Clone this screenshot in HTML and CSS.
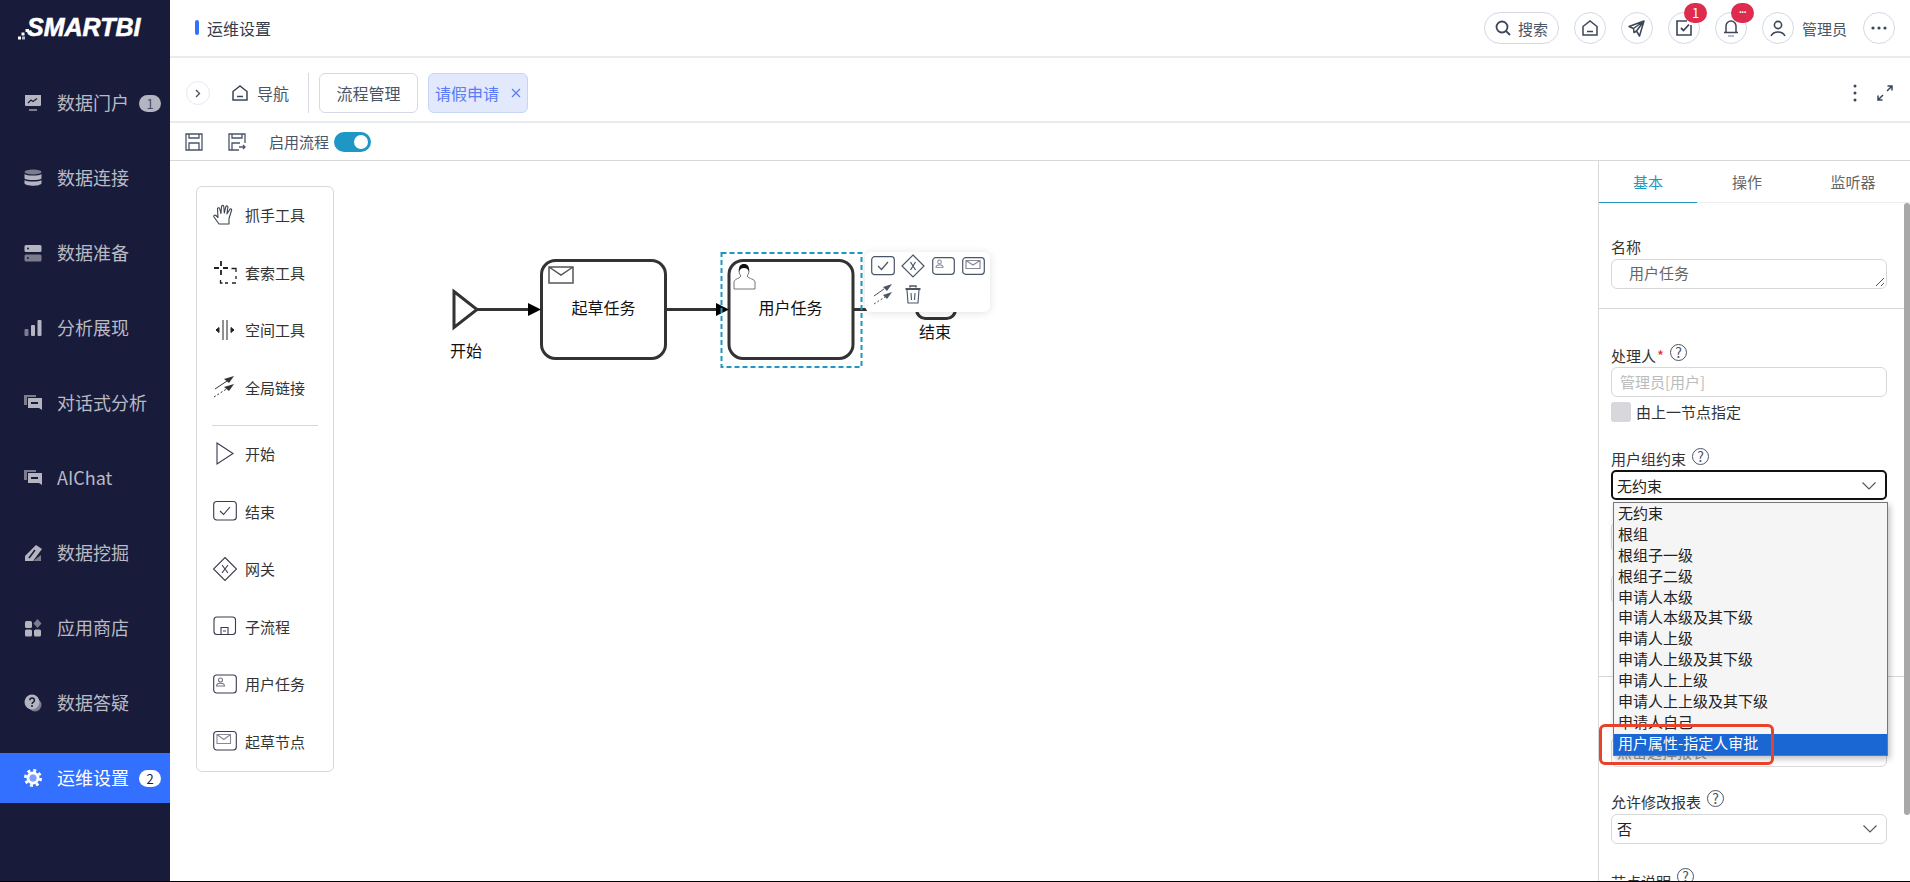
FILE: index.html
```html
<!DOCTYPE html>
<html lang="en">
<head>
  <meta charset="UTF-8">
  <title>运维设置</title>
  <link rel="stylesheet" href="styles.css">
</head>
<body>

<div class="app">
  <!-- Sidebar -->
  <aside class="sidebar">
    <div class="logo">
      <svg class="logo-dots" width="11" height="11" viewBox="0 0 11 11" fill="#fff"><rect x="0" y="7.500" width="3" height="3"/><rect x="3.500" y="3.500" width="3" height="3"/><rect x="7.500" y="0" width="3.500" height="3"/><rect x="4" y="7.500" width="3" height="3" opacity=".7"/></svg>
      <span>SMARTBI</span>
    </div>
    <nav class="menu">
      <a class="menu-item">
        <svg class="menu-icon" viewBox="0 0 18 18"><path d="M1 1h16v10a1 1 0 0 1-1 1H2a1 1 0 0 1-1-1z" fill="#b4b5c0"/><path d="M4 9l3-3 2 1.500 4-3" stroke="#181c3a" stroke-width="1.200" fill="none"/><rect x="5" y="15" width="8" height="2" fill="#7b7d8e"/></svg>
        <span class="menu-label">数据门户</span><span class="menu-badge">1</span>
      </a>
      <a class="menu-item">
        <svg class="menu-icon" viewBox="0 0 18 18" fill="#b4b5c0"><ellipse cx="9" cy="3" rx="8.500" ry="2.500" fill="#7b7d8e"/><path d="M.5 5c2 2 15 2 17 0v4.500c-2 2-15 2-17 0zM.5 11c2 2 15 2 17 0v3.500c-2 3-15 3-17 0z"/></svg>
        <span class="menu-label">数据连接</span>
      </a>
      <a class="menu-item">
        <svg class="menu-icon" viewBox="0 0 18 18"><rect x=".5" y="1" width="17" height="7" rx="1.500" fill="#b4b5c0"/><rect x=".5" y="10.500" width="17" height="7" rx="1.500" fill="#7b7d8e"/><circle cx="4" cy="4.500" r="1" fill="#181c3a"/><circle cx="4" cy="14" r="1" fill="#181c3a"/></svg>
        <span class="menu-label">数据准备</span>
      </a>
      <a class="menu-item">
        <svg class="menu-icon" viewBox="0 0 18 18"><rect x=".5" y="10" width="4" height="7" rx="1" fill="#7b7d8e"/><rect x="7" y="6" width="4" height="11" rx="1" fill="#b4b5c0"/><rect x="13.500" y="1" width="4" height="16" rx="1" fill="#b4b5c0"/></svg>
        <span class="menu-label">分析展现</span>
      </a>
      <a class="menu-item">
        <svg class="menu-icon" viewBox="0 0 18 18"><path d="M0 1h12v2H3v8H0z" fill="#7b7d8e"/><path d="M4 4h14v12l-3-2H4z" fill="#b4b5c0"/><rect x="7" y="8" width="7" height="2" fill="#181c3a"/></svg>
        <span class="menu-label">对话式分析</span>
      </a>
      <a class="menu-item">
        <svg class="menu-icon" viewBox="0 0 18 18"><path d="M0 1h12v2H3v8H0z" fill="#7b7d8e"/><path d="M4 4h14v12l-3-2H4z" fill="#b4b5c0"/><rect x="7" y="8" width="7" height="2" fill="#181c3a"/></svg>
        <span class="menu-label">AIChat</span>
      </a>
      <a class="menu-item">
        <svg class="menu-icon" viewBox="0 0 18 18"><path d="M9 17h8v-6z" fill="#7b7d8e"/><path d="M12 1l6 4-9 12H1v-5z" fill="#b4b5c0"/><path d="M5 14l6-8" stroke="#181c3a" stroke-width="1.500"/></svg>
        <span class="menu-label">数据挖掘</span>
      </a>
      <a class="menu-item">
        <svg class="menu-icon" viewBox="0 0 18 18" fill="#b4b5c0"><rect x="1" y="2" width="7" height="7" rx="1.500"/><path d="M13.500 0l4 4.500-4 4.500-4-4.500z" fill="#7b7d8e"/><rect x="1" y="10.500" width="7" height="7" rx="1.500"/><rect x="10" y="10.500" width="7" height="7" rx="1.500"/></svg>
        <span class="menu-label">应用商店</span>
      </a>
      <a class="menu-item">
        <svg class="menu-icon" viewBox="0 0 18 18"><circle cx="11" cy="11" r="6.500" fill="#7b7d8e"/><circle cx="8" cy="8" r="7.500" fill="#b4b5c0"/><path d="M5.800 6.200a2.300 2.300 0 1 1 3.500 2c-.9.500-1.200 1-1.200 1.800" stroke="#181c3a" stroke-width="1.500" fill="none"/><circle cx="8" cy="12" r="1" fill="#181c3a"/></svg>
        <span class="menu-label">数据答疑</span>
      </a>
      <a class="menu-item active">
        <svg class="menu-icon" viewBox="0 0 18 18"><circle cx="9" cy="9" r="3.500" fill="#7d9ffb"/><circle cx="9" cy="9" r="5" fill="none" stroke="#fff" stroke-width="3"/><circle cx="9" cy="9" r="7.600" fill="none" stroke="#fff" stroke-width="2.800" stroke-dasharray="3 2.970"/></svg>
        <span class="menu-label">运维设置</span><span class="menu-badge">2</span>
      </a>
    </nav>
  </aside>

  <main class="main">
    <!-- Header -->
    <header class="topbar">
      <div class="page-title">运维设置</div>
      <div class="top-actions">
        <div class="search-pill">
          <svg width="16" height="16" viewBox="0 0 16 16" fill="none" stroke="#3c4658" stroke-width="1.800"><circle cx="7" cy="7" r="5.500"/><path d="M11 11l4 4"/></svg>
          <span>搜索</span>
        </div>
        <div class="circle-btn"><svg width="16" height="16" viewBox="0 0 16 16" fill="none" stroke="#3c4658" stroke-width="1.500"><path d="M1 6.500L8 1l7 5.500V15H1z"/><path d="M5 11.500h6"/></svg></div>
        <div class="circle-btn"><svg width="17" height="17" viewBox="0 0 17 17" fill="none" stroke="#3c4658" stroke-width="1.500" stroke-linejoin="round"><path d="M1 6.500L16 1l-4.500 15-3-5-2.500 1.500-.5-4zM5.500 8.500L16 1 8.500 11"/></svg></div>
        <div class="circle-btn">
          <svg width="16" height="16" viewBox="0 0 16 16" fill="none" stroke="#3c4658" stroke-width="1.600"><path d="M11 1H1v14h14V5"/><path d="M5 8l2.500 2.500L13 4.500" stroke-width="1.800"/></svg>
          <span class="red-badge">1</span>
        </div>
        <div class="circle-btn">
          <svg width="16" height="18" viewBox="0 0 16 18" fill="none" stroke="#3c4658" stroke-width="1.500"><path d="M1 13.500h14M3 13.500V7a5 5 0 0 1 10 0v6.500"/><path d="M5 17h6" stroke="#a0a6b2"/></svg>
          <span class="red-badge dots">···</span>
        </div>
        <div class="user-box">
          <div class="circle-btn"><svg width="16" height="17" viewBox="0 0 16 17" fill="none" stroke="#3c4658" stroke-width="1.600"><circle cx="8" cy="5" r="3.600"/><path d="M1 16c1.500-3 4-4 7-4s5.500 1 7 4"/></svg></div>
          <span>管理员</span>
        </div>
        <div class="circle-btn"><svg width="16" height="4" viewBox="0 0 16 4" fill="#3c4658"><circle cx="2" cy="2" r="1.600"/><circle cx="8" cy="2" r="1.600"/><circle cx="14" cy="2" r="1.600"/></svg></div>
      </div>
    </header>

    <!-- Tabs -->
    <div class="tabbar">
      <div class="collapse-btn"><svg width="6" height="9" viewBox="0 0 6 9" fill="none" stroke="#444e5e" stroke-width="1.300"><path d="M1 1l3.500 3.500L1 8"/></svg></div>
      <div class="nav-home">
        <svg width="16" height="16" viewBox="0 0 16 16" fill="none" stroke="#3c4658" stroke-width="1.500"><path d="M1 6.500L8 1l7 5.500V15H1z"/><path d="M5 11.500h6"/></svg>
        <span>导航</span>
      </div>
      <div class="tab-sep"></div>
      <div class="tab">流程管理</div>
      <div class="tab tab-on">请假申请
        <svg class="tab-close" width="10" height="10" viewBox="0 0 10 10" stroke="#5a7bf5" stroke-width="1.200"><path d="M1 1l8 8M9 1l-8 8"/></svg>
      </div>
      <div class="tab-tools">
        <svg width="4" height="18" viewBox="0 0 4 18" fill="#3c4658"><circle cx="2" cy="2" r="1.500"/><circle cx="2" cy="9" r="1.500"/><circle cx="2" cy="16" r="1.500"/></svg>
        <svg width="16" height="16" viewBox="0 0 16 16" fill="none" stroke="#3c4658" stroke-width="1.500"><path d="M10 6l5-5M10.500 1H15v4.500M6 10l-5 5M1 10.500V15h4.500"/></svg>
      </div>
    </div>

    <!-- Toolbar -->
    <div class="toolbar">
      <svg class="save-icon" width="18" height="18" viewBox="0 0 18 18" fill="none" stroke="#4a5566" stroke-width="1.300"><path d="M1 1h16v16H1zM4 1v4h10V1M4 17v-7h10v7"/></svg>
      <svg class="save-icon" width="18" height="18" viewBox="0 0 18 18" fill="none" stroke="#4a5566" stroke-width="1.300"><path d="M17 10V1H1v16h10M4 1v4h10V1M4 17v-7h8M11 14h6M15 12l2 2-2 2"/></svg>
      <span class="toolbar-label">启用流程</span>
      <span class="switch"><i></i></span>
    </div>

    <div class="work">
      <!-- Canvas -->
      <section class="canvas">
        <div class="palette">
          <div class="tool">
            <svg class="tool-icon" viewBox="0 0 24 24" fill="none" stroke="#3c4454" stroke-width="1.100" stroke-linejoin="round"><path d="M6 21l-5-7c-.8-1.300.8-2.500 2-1.500l2 2L4.500 6c-.2-1.500 1.800-1.800 2.200-.4L8 10.500 8.500 3.500c.1-1.500 2.200-1.500 2.300 0l.5 6.500 1.500-6.200c.4-1.400 2.300-1 2.100.4l-1 6.800 2.800-4.500c.8-1.200 2.400-.3 1.800 1L16 15.500V21z"/></svg>
            <span>抓手工具</span>
          </div>
          <div class="tool">
            <svg class="tool-icon" viewBox="0 0 24 24" fill="none" stroke="#222" stroke-width="1.300"><path d="M8 1v5M8 10v5M1 8h5M10 8h5" stroke-width="1.800"/><path d="M18.500 8.500H23V12M23 16v3M23 23h-4M15 23h-3M9.500 23H7.500v-3"/></svg>
            <span>套索工具</span>
          </div>
          <div class="tool">
            <svg class="tool-icon" viewBox="0 0 24 24" fill="#222" stroke="#222" stroke-width="1"><path d="M10 2v20M14 2v20" fill="none"/><path d="M6 12H3M3 12l3-2.500v5zM18 12h3M21 12l-3-2.500v5z"/></svg>
            <span>空间工具</span>
          </div>
          <div class="tool">
            <svg class="tool-icon" viewBox="0 0 24 24"><path d="M2 14L14 6" stroke="#333" fill="none"/><path d="M21 1l-10 3 5 4z" fill="#333"/><path d="M1 22L15 13" stroke="#333" stroke-dasharray="2 2" fill="none"/><path d="M21 9l-10 3 5 4z" fill="#333"/></svg>
            <span>全局链接</span>
          </div>
          <div class="tool-sep"></div>
          <div class="tool">
            <svg class="tool-icon" viewBox="0 0 24 24" fill="none" stroke="#3a3a50" stroke-width="1.100"><path d="M4 1l16 10.500L4 22z"/></svg>
            <span>开始</span>
          </div>
          <div class="tool">
            <svg class="tool-icon" viewBox="0 0 24 24" fill="none" stroke="#3a3a50" stroke-width="1.100"><rect x=".7" y="2.500" width="22.600" height="18.500" rx="3"/><path d="M7 12l3.500 3.500L17 8"/></svg>
            <span>结束</span>
          </div>
          <div class="tool">
            <svg class="tool-icon" viewBox="0 0 24 24" fill="none" stroke="#3a3a50" stroke-width="1.100"><path d="M12 .5L23.500 12 12 23.500.5 12z"/><path d="M9 8l6 8M15 8l-6 8"/></svg>
            <span>网关</span>
          </div>
          <div class="tool">
            <svg class="tool-icon" viewBox="0 0 24 24" fill="none" stroke="#3a3a50" stroke-width="1.100"><rect x="1" y="3" width="21.500" height="17.500" rx="3"/><path d="M8 20v-6.500h7V20M10 17h3"/></svg>
            <span>子流程</span>
          </div>
          <div class="tool">
            <svg class="tool-icon" viewBox="0 0 24 24" fill="none" stroke="#3a3a50" stroke-width="1.100"><rect x=".7" y="3" width="22.600" height="18" rx="3"/><circle cx="7.500" cy="8" r="2" stroke="#778"/><path d="M3.500 14c0-1.800 2-2.800 4-2.800s4 1 4 2.800z" stroke="#778"/></svg>
            <span>用户任务</span>
          </div>
          <div class="tool">
            <svg class="tool-icon" viewBox="0 0 24 24" fill="none" stroke="#3a3a50" stroke-width="1.100"><rect x=".7" y="2.500" width="22.600" height="18.500" rx="3"/><path d="M4 5.500h13.500v9H4zM4 5.500l6.750 5 6.750-5" stroke="#889"/></svg>
            <span>起草节点</span>
          </div>
        </div>

        <!-- BPMN diagram, coordinates are the content here -->
        <svg class="diagram" width="1428" height="720" viewBox="170 161 1428 720">
          <g fill="none" stroke="#333" stroke-width="3">
            <path d="M454 291.500l23 18-23 18z"/>
            <path d="M477 309.500h51M666 309.500h50M853 309.500h30"/>
            <rect x="541.500" y="260.500" width="124" height="98" rx="14"/>
            <rect x="729" y="260.500" width="124" height="98" rx="14" fill="#fff"/>
            <path d="M916.500 300v9.500a9 9 0 0 0 9 9h21a9 9 0 0 0 9-9V300"/>
          </g>
          <path d="M528 303l13 6.500-13 6.500zM716 303l13 6.500-13 6.500z" fill="#000"/>
          <g fill="none" stroke="#555" stroke-width="1.500">
            <path d="M549 267h24v16h-24zM549 267l12 8 12-8"/>
          </g>
          <g fill="none" stroke="#666" stroke-width=".9">
            <path d="M734 289v-7c0-3 5-3 7-6-3-3-3-10 3-10s6 7 3 10c2 3 8 3 8 6v7z" fill="#fff"/>
          </g>
          <path d="M739 272c-.5-6 1.500-8 5-8s5.500 2 5 8c-1-3-2-4-5-4s-4 1-5 4z" fill="#111"/>
          <rect x="721.500" y="253" width="140" height="114" fill="none" stroke="#1f97c4" stroke-width="2" stroke-dasharray="5 3"/>
          <text class="d-text" x="603.500" y="314" text-anchor="middle">起草任务</text>
          <text class="d-text" x="790.500" y="314" text-anchor="middle">用户任务</text>
          <text class="d-text" x="466" y="357" text-anchor="middle">开始</text>
          <text class="d-text" x="935" y="338" text-anchor="middle">结束</text>
        </svg>

        <!-- Context pad -->
        <div class="pad">
          <svg width="24" height="20" viewBox="0 0 24 20" fill="none" stroke="#4a5566" stroke-width="1.200"><rect x=".7" y=".7" width="22.600" height="18" rx="3"/><path d="M7 10l3.500 3.500L17 6"/></svg>
          <svg width="24" height="24" viewBox="0 0 24 24" fill="none" stroke="#4a5566" stroke-width="1.200"><path d="M12 1l11 11-11 11L1 12z"/><path d="M9.500 8l5 8M14.500 8l-5 8"/></svg>
          <svg width="23" height="18" viewBox="0 0 23 18" fill="none" stroke="#4a5566" stroke-width="1.200"><rect x=".7" y=".7" width="21.600" height="16.600" rx="3"/><circle cx="7.500" cy="5" r="1.800" stroke="#99a"/><path d="M4 10.500c0-1.800 1.500-2.700 3.500-2.700s3.500.9 3.500 2.700z" stroke="#99a"/></svg>
          <svg width="23" height="18" viewBox="0 0 23 18" fill="none" stroke="#4a5566" stroke-width="1.200"><rect x=".7" y=".7" width="21.600" height="16.600" rx="3"/><path d="M4 3.500h14v8H4zM4 3.500l7 4.500 7-4.500" stroke="#889"/></svg>
          <svg width="20" height="22" viewBox="0 0 20 22"><path d="M1 13L11 6" stroke="#4a5566" fill="none"/><path d="M19 1l-9 3 4 4z" fill="#4a5566"/><path d="M1 21L12 14" stroke="#4a5566" stroke-dasharray="2 2" fill="none"/><path d="M19 9l-9 3 4 4z" fill="#4a5566"/></svg>
          <svg width="16" height="19" viewBox="0 0 16 19" fill="none" stroke="#4a5566" stroke-width="1.100"><path d="M.5 4h15" stroke-width="2"/><path d="M5 2.500V1h6v1.500" stroke-width="1.500"/><path d="M2 5l1 13h10l1-13M6 8l.5 7M10 8l-.5 7"/></svg>
        </div>
      </section>

      <!-- Properties -->
      <aside class="props">
        <div class="props-tabs">
          <div class="props-tab on">基本</div>
          <div class="props-tab">操作</div>
          <div class="props-tab">监听器</div>
        </div>
        <div class="props-body">
          <div class="group first">
            <label class="field-label">名称</label>
            <div class="textarea">用户任务
              <svg class="resize" width="10" height="10" viewBox="0 0 10 10" stroke="#555" stroke-width="1"><path d="M1 9l8-8M6 9l3-3"/></svg>
            </div>
          </div>
          <div class="group">
            <label class="field-label">处理人<em>*</em><span class="help">?</span></label>
            <div class="input placeholder">管理员[用户]</div>
            <div class="check-row"><span class="check"></span><span class="check-text">由上一节点指定</span></div>
            <label class="field-label gap-top">用户组约束<span class="help">?</span></label>
            <div class="select focus">无约束
              <svg class="chevron" width="14" height="8" viewBox="0 0 14 8" fill="none" stroke="#555" stroke-width="1.100"><path d="M.5.500L7 7 13.500.5"/></svg>
            </div>
            <div class="hidden-rows">
              <div class="input sliver"></div>
              <div class="input sliver"></div>
            </div>
          </div>
          <div class="group">
            <div class="hidden-gap"></div>
            <div class="input covered">点击选择报表</div>
            <label class="field-label gap-top2">允许修改报表<span class="help">?</span></label>
            <div class="select">否
              <svg class="chevron" width="14" height="8" viewBox="0 0 14 8" fill="none" stroke="#555" stroke-width="1.100"><path d="M.5.500L7 7 13.500.5"/></svg>
            </div>
            <label class="field-label gap-top3">节点说明<span class="help">?</span></label>
          </div>
        </div>
        <div class="scroll-thumb"></div>

        <!-- Open native-looking dropdown -->
        <ul class="dropdown">
          <li>无约束</li>
          <li>根组</li>
          <li>根组子一级</li>
          <li>根组子二级</li>
          <li>申请人本级</li>
          <li>申请人本级及其下级</li>
          <li>申请人上级</li>
          <li>申请人上级及其下级</li>
          <li>申请人上上级</li>
          <li>申请人上上级及其下级</li>
          <li>申请人自己</li>
          <li class="picked">用户属性-指定人审批</li>
        </ul>
        <div class="annot"></div>
      </aside>
    </div>
  </main>
</div>

</body>
</html>
```

FILE: styles.css
```css
* {
  box-sizing: border-box;
}

html, body {
  margin: 0;
  height: 100%;
  overflow: hidden;
}

body {
  font-family: "Noto Sans CJK SC", "Noto Sans", sans-serif;
  color: #333;
  background: #fff;
}

.app {
  display: flex;
  height: 882px;
  border-bottom: 1px solid #000;
}

/* Sidebar */
.sidebar {
  width: 170px;
  flex: none;
  background: #181c3a;
  color: #b9bac4;
}

.logo {
  height: 58px;
  padding: 14px 0 0 18px;
  display: flex;
  align-items: flex-start;
  color: #fff;
  font: italic bold 25px/26px "Liberation Sans", sans-serif;
  -webkit-text-stroke: 0.6px #fff;
}

.logo-dots {
  margin: 15px 0 0 0;
  flex: none;
}

.logo span {
  margin-left: -2px;
}

.menu {
  padding-top: 20px;
  display: flex;
  flex-direction: column;
  gap: 25px;
}

.menu-item {
  height: 50px;
  display: flex;
  align-items: center;
  padding-left: 24px;
  font-size: 18px;
}

.menu-item.active {
  background: #3370ff;
  color: #fff;
}

.menu-icon {
  width: 18px;
  height: 18px;
  margin-right: 15px;
  flex: none;
}

.menu-label {
  white-space: nowrap;
  margin-top: -2px;
}

.menu-badge {
  margin-left: 10px;
  width: 22px;
  height: 17px;
  line-height: 17px;
  border-radius: 9px;
  background: #b4b5c0;
  color: #4a4d60;
  font-size: 13px;
  text-align: center;
}

.menu-item.active .menu-badge {
  background: #fff;
  color: #181c3a;
}

/* Main */
.main {
  flex: 1;
  min-width: 0;
  display: flex;
  flex-direction: column;
}

.topbar {
  height: 58px;
  flex: none;
  border-bottom: 2px solid #e8ebf0;
  display: flex;
  align-items: center;
  justify-content: space-between;
  padding: 2px 15px 0 25px;
}

.page-title {
  font-size: 16px;
  line-height: 18px;
  color: #333c4c;
  margin-top: -3px;
  padding-left: 12px;
  position: relative;
}

.page-title::before {
  content: "";
  position: absolute;
  left: 0;
  top: 1px;
  width: 4px;
  height: 15px;
  border-radius: 2px;
  background: #3370ff;
}

.top-actions {
  display: flex;
  align-items: center;
  gap: 15px;
  margin-top: -2px;
}

.search-pill {
  width: 75px;
  height: 32px;
  border: 1px solid #d5d9e6;
  border-radius: 16px;
  display: flex;
  align-items: center;
  justify-content: center;
  gap: 7px;
  font-size: 15px;
  color: #4a5566;
}

.circle-btn {
  width: 32px;
  height: 32px;
  border: 1px solid #d5d9e6;
  border-radius: 50%;
  display: flex;
  align-items: center;
  justify-content: center;
  position: relative;
  flex: none;
}

.red-badge {
  position: absolute;
  top: -10px;
  left: 15px;
  width: 23px;
  height: 20px;
  border-radius: 10px;
  background: #de2c4e;
  color: #fff;
  font-size: 13px;
  line-height: 20px;
  text-align: center;
}

.red-badge.dots {
  font: bold 10px/20px "Liberation Sans", sans-serif;
  letter-spacing: -1px;
}

.user-box {
  display: flex;
  align-items: center;
  gap: 8px;
  font-size: 15px;
  color: #4a5566;
  padding-right: 1px;
}

/* Tabs */
.tabbar {
  height: 65px;
  flex: none;
  border-bottom: 2px solid #e8ebf0;
  display: flex;
  align-items: center;
  padding: 7px 0 0 16px;
  font-size: 16px;
}

.collapse-btn {
  width: 24px;
  height: 24px;
  border: 1px solid #e8e8f0;
  border-radius: 50%;
  display: flex;
  align-items: center;
  justify-content: center;
}

.nav-home {
  display: flex;
  align-items: center;
  gap: 10px;
  margin-left: 22px;
  color: #4a5566;
}

.nav-home span {
  margin-left: -1px;
}

.tab-sep {
  width: 1px;
  height: 40px;
  background: #d5d9e6;
  margin: 0 10px 0 19px;
}

.tab {
  width: 99px;
  height: 40px;
  border: 1px solid #d5d9e6;
  border-radius: 6px;
  display: flex;
  align-items: center;
  justify-content: center;
  color: #4a5566;
  margin-right: 10px;
  white-space: nowrap;
}

.tab-on {
  width: 100px;
  background: #e2e9fd;
  border-color: #c6d4f8;
  color: #5a7bf5;
  justify-content: flex-start;
  padding-left: 6px;
}

.tab-close {
  margin-left: 12px;
}

.tab-tools {
  margin-left: auto;
  padding-right: 17px;
  display: flex;
  align-items: center;
  gap: 20px;
}

/* Toolbar */
.toolbar {
  height: 38px;
  flex: none;
  border-bottom: 1px solid #d8d8d8;
  display: flex;
  align-items: center;
  padding-left: 15px;
  font-size: 15px;
  color: #4a5566;
}

.save-icon {
  margin-right: 25px;
}

.save-icon + .save-icon {
  margin-right: 23px;
}

.toolbar-label {
  margin-right: 5px;
}

.switch {
  width: 37px;
  height: 20px;
  border-radius: 10px;
  background: #1f97c4;
  position: relative;
}

.switch i {
  position: absolute;
  right: 3px;
  top: 3px;
  width: 14px;
  height: 14px;
  border-radius: 50%;
  background: #fff;
}

/* Work area */
.work {
  flex: 1;
  min-height: 0;
  display: flex;
}

.canvas {
  flex: 1;
  position: relative;
  overflow: hidden;
  padding: 25px 0 0 26px;
}

.palette {
  width: 138px;
  border: 1px solid #d8d8d8;
  border-radius: 6px;
  background: #fff;
  position: relative;
  z-index: 1;
}

.tool {
  height: 57.5px;
  display: flex;
  align-items: center;
  padding: 0 0 2px 16px;
  font-size: 15px;
  color: #333;
}

.tool-icon {
  width: 24px;
  height: 24px;
  margin-right: 8px;
  flex: none;
}

.tool-sep {
  height: 1px;
  background: #d8d8d8;
  margin: 8px 15px 0;
}

.diagram {
  position: absolute;
  left: 0;
  top: 0;
}

.d-text {
  font-size: 16px;
  fill: #111;
}

.pad {
  position: absolute;
  left: 695px;
  top: 91px;
  width: 125px;
  height: 60px;
  background: #fff;
  border-radius: 6px;
  box-shadow: 0 1px 8px rgba(0, 0, 0, 0.12);
  display: grid;
  grid-template-columns: repeat(4, 30px);
  grid-auto-rows: 28px;
  align-items: center;
  justify-items: center;
  padding: 0 0 0 3px;
}

/* Properties */
.props {
  width: 312px;
  flex: none;
  border-left: 1px solid #d8d8d8;
  position: relative;
  overflow: hidden;
  background: #fff;
  font-size: 15px;
}

.props-tabs {
  height: 42px;
  display: flex;
  border-bottom: 1px solid #ececec;
}

.props-tab {
  width: 100px;
  text-align: center;
  line-height: 42px;
  color: #666;
}

.props-tab.on {
  width: 98px;
  color: #1f97c4;
  border-bottom: 1px solid #1f97c4;
  height: 42px;
}

.props-tab:last-child {
  width: 112px;
}

.group {
  padding: 36px 18px 0 12px;
  border-bottom: 1px solid #d8d8d8;
}

.group.first {
  padding-top: 33px;
  height: 106px;
}

.group.first .field-label {
  margin-bottom: 1px;
}

.group:nth-child(2) {
  height: 368px;
}

.group:last-child {
  border-bottom: 0;
}

.field-label {
  display: flex;
  align-items: center;
  height: 22px;
  padding-bottom: 2px;
  color: #333;
}

.field-label em {
  color: #f5222d;
  font-style: normal;
  margin-left: 1px;
}

.help {
  width: 17px;
  height: 17px;
  border: 1px solid #4a5566;
  border-radius: 50%;
  color: #4a5566;
  font-size: 14px;
  line-height: 15px;
  text-align: center;
  margin: -6px 0 0 6px;
}

.gap-top .help {
  margin-top: -4px;
}

.gap-top3 .help {
  margin-top: -9px;
}

.textarea, .input, .select {
  width: 276px;
  height: 30px;
  border: 1px solid #d8d8d8;
  border-radius: 6px;
  position: relative;
  line-height: 26px;
  padding-left: 5px;
}

.textarea {
  padding-left: 17px;
  color: #666;
}

.resize {
  position: absolute;
  right: 1px;
  bottom: 1px;
}

.placeholder {
  color: #bbb;
  padding-left: 8px;
  line-height: 28px;
}

.covered {
  color: #999;
  padding-left: 5px;
  line-height: 28px;
}

.check-row {
  display: flex;
  align-items: center;
  gap: 5px;
  margin-top: 5px;
  height: 20px;
  color: #333;
}

.check-text {
  margin-top: -2px;
}

.check {
  width: 20px;
  height: 20px;
  border-radius: 3px;
  background: #d8d8dc;
}

.gap-top {
  margin-top: 26px;
}

.gap-top2 {
  margin-top: 24px;
  margin-bottom: 1px;
}

.gap-top3 {
  margin-top: 27px;
}

.select {
  color: #222;
  line-height: 28px;
}

.select.focus {
  border: 2px solid #111;
  border-radius: 5px;
  line-height: 27px;
  padding-left: 4px;
}

.chevron {
  position: absolute;
  right: 9px;
  top: 10px;
}

.hidden-rows .sliver {
  margin-top: 22px;
}

.hidden-gap {
  height: 24px;
}

.scroll-thumb {
  position: absolute;
  right: 0;
  top: 42px;
  width: 6px;
  height: 612px;
  border-radius: 3px;
  background: #a8a8a8;
}

.dropdown {
  position: absolute;
  left: 14px;
  top: 341px;
  width: 275px;
  height: 254px;
  margin: 0;
  padding: 1px 0;
  list-style: none;
  background: #f5f5f5;
  border: 1px solid #767676;
  box-shadow: 2px 3px 6px rgba(0, 0, 0, 0.25);
  color: #222;
}

.dropdown li {
  height: 20.900px;
  line-height: 18px;
  padding-left: 4px;
  white-space: nowrap;
}

.dropdown .picked {
  background: #1a66d2;
  color: #fff;
}

.annot {
  position: absolute;
  left: 0;
  top: 563px;
  width: 175px;
  height: 41px;
  border: 3px solid #e8432a;
  border-radius: 6px;
}
```
